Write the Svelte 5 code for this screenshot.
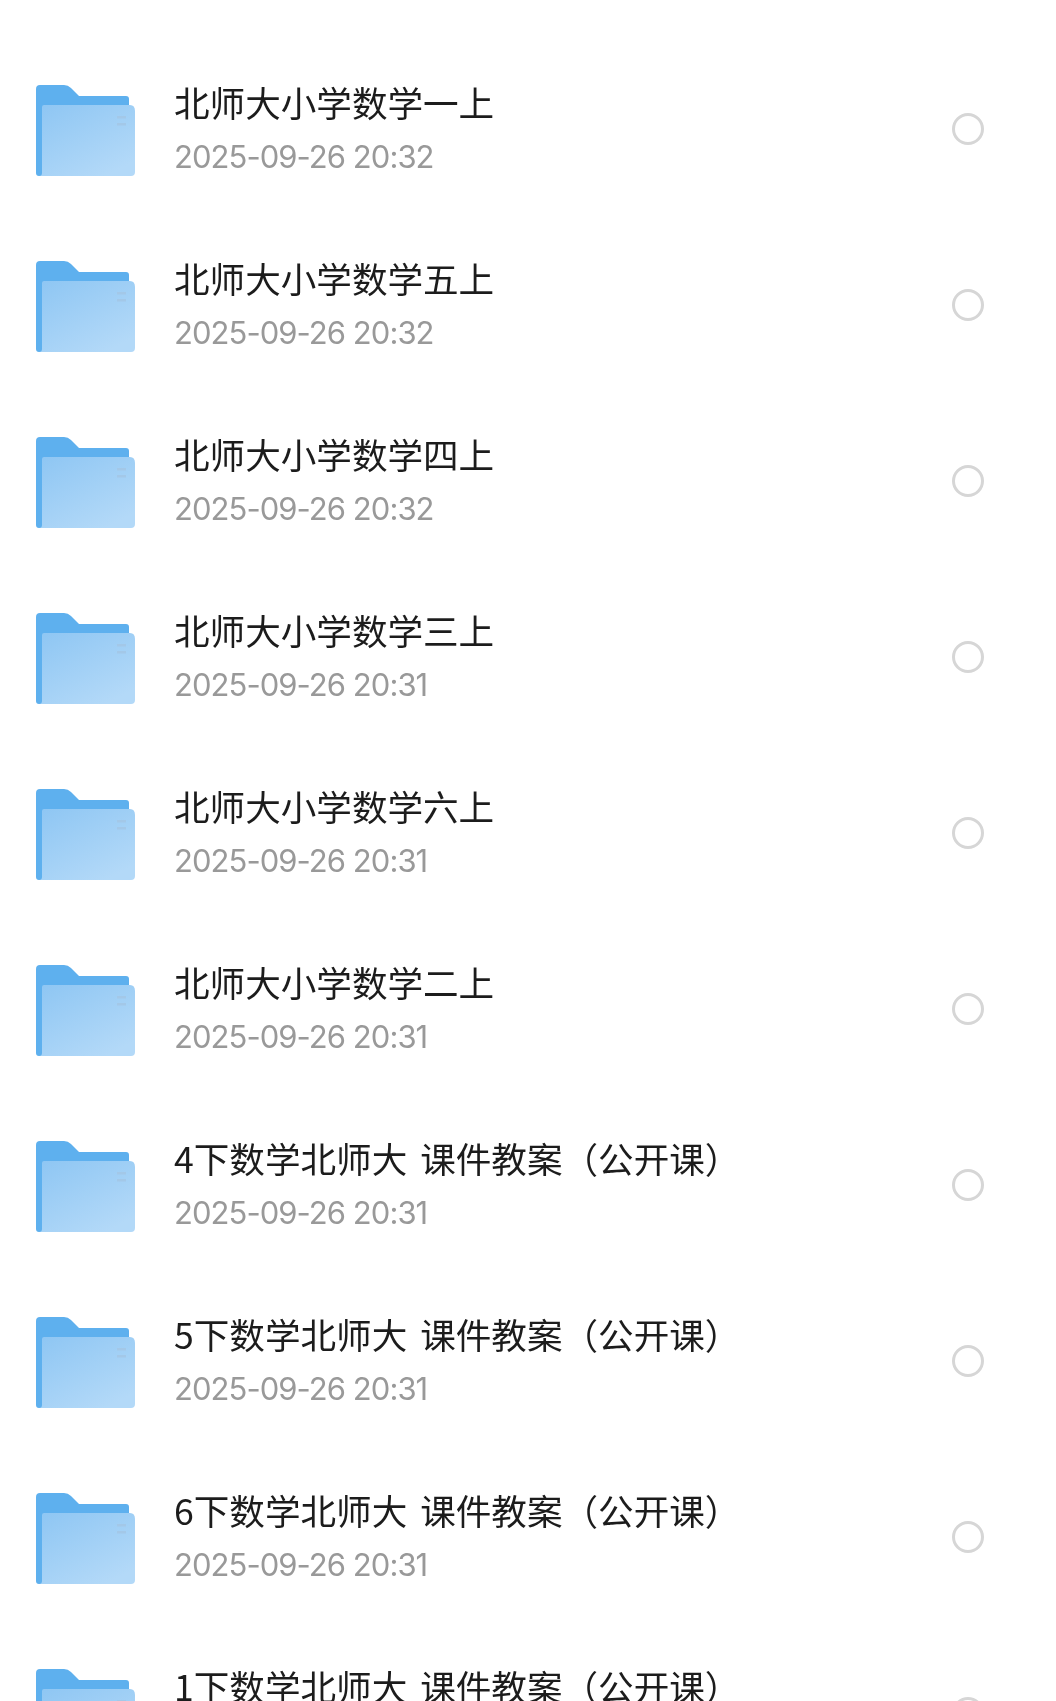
<script>
    const rows = [
        { name: "北师大小学数学一上", time: "2025-09-26 20:32" },
        { name: "北师大小学数学五上", time: "2025-09-26 20:32" },
        { name: "北师大小学数学四上", time: "2025-09-26 20:32" },
        { name: "北师大小学数学三上", time: "2025-09-26 20:31" },
        { name: "北师大小学数学六上", time: "2025-09-26 20:31" },
        { name: "北师大小学数学二上", time: "2025-09-26 20:31" },
        { name: "4下数学北师大 课件教案（公开课）", time: "2025-09-26 20:31" },
        { name: "5下数学北师大 课件教案（公开课）", time: "2025-09-26 20:31" },
        { name: "6下数学北师大 课件教案（公开课）", time: "2025-09-26 20:31" },
        { name: "1下数学北师大 课件教案（公开课）", time: "2025-09-26 20:31" }
    ];
</script>

<div class="page">
    {#each rows as row, i}
        <div class="row">
            <svg class="folder" width="100" height="92" viewBox="0 0 100 92">
                <defs>
                    <linearGradient id="front{i}" x1="0" y1="0" x2="0.7" y2="1">
                        <stop offset="0" stop-color="#8ec6f3" />
                        <stop offset="1" stop-color="#b3d9f8" />
                    </linearGradient>
                </defs>
                <path d="M4 0H28Q32 0 35 3L43 11H90Q93 11 93 14V40H6V91H3Q0 91 0 88V4Q0 0 4 0Z" fill="#5eb0ee" />
                <path d="M8 20H94Q99 20 99 26V87Q99 91 95 91H3Q6 91 6 88V22Q6 20 8 20Z" fill="url(#front{i})" />
                <rect x="81" y="31" width="9" height="2.5" fill="#a3c8e8" />
                <rect x="81" y="38" width="9" height="2.5" fill="#a3c8e8" />
            </svg>
            <div class="info">
                <div class="name">{row.name}</div>
                <div class="time">{row.time}</div>
            </div>
            <div class="radio"></div>
        </div>
    {/each}
</div>

<style>
    :global(body) {
        background: #fff;
    }

    .page {
        height: 1701px;
        overflow: hidden;
        padding-top: 41px;
        box-sizing: border-box;
        filter: blur(0.4px);
    }

    .row {
        display: flex;
        align-items: center;
        height: 176px;
        padding-left: 36px;
        padding-right: 72px;
    }

    .folder {
        flex: none;
        margin-right: 38px;
        margin-top: 4px;
    }

    .info {
        flex: 1;
        display: flex;
        flex-direction: column;
        gap: 9px;
        margin-bottom: 2px;
    }

    .name {
        font-family: "Noto Sans CJK SC", sans-serif;
        font-size: 35.6px;
        line-height: 48px;
        color: #1c1c1c;
        white-space: pre;
        word-spacing: 5px;
    }

    .time {
        font-family: Inter, sans-serif;
        font-size: 31px;
        letter-spacing: -0.95px;
        line-height: 44px;
        color: #999;
    }

    .radio {
        flex: none;
        width: 32px;
        height: 32px;
        box-sizing: border-box;
        border: 3px solid #d6d6d6;
        border-radius: 50%;
    }
</style>
